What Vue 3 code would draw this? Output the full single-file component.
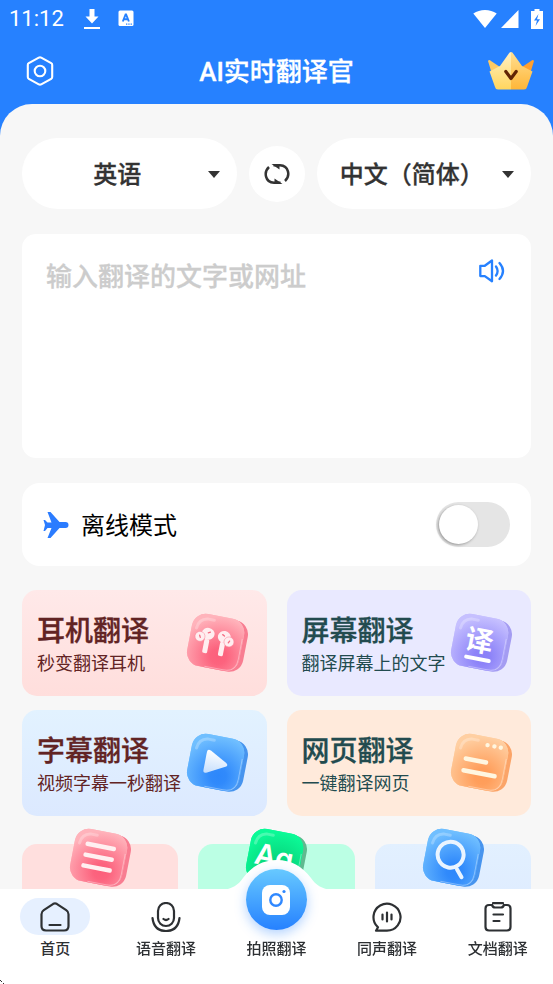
<script setup>
import { ref } from 'vue'

const source = ref('en')
const target = ref('zh')
const text = ref('')
const offline = ref(false)

const swap = () => {
    const old = source.value
    source.value = target.value
    target.value = old
}

const palette = {
    red: { light: '#ffb3bb', dark: '#fc5f7b', edge: '#f87d91' },
    purple: { light: '#c6c0ff', dark: '#8a80f8', edge: '#a49cf2' },
    blue: { light: '#70bfff', dark: '#2d87fb', edge: '#4794ee' },
    orange: { light: '#ffcfa2', dark: '#ff9c58', edge: '#fba468' },
    green: { light: '#0bfa97', dark: '#07cf78', edge: '#5fb98f' }
}

const cards = [
    { id: 'earphone', title: '耳机翻译', desc: '秒变翻译耳机', color: 'red' },
    { id: 'screen', title: '屏幕翻译', desc: '翻译屏幕上的文字', color: 'purple' },
    { id: 'subtitle', title: '字幕翻译', desc: '视频字幕一秒翻译', color: 'blue' },
    { id: 'web', title: '网页翻译', desc: '一键翻译网页', color: 'orange' }
]

const tiles = [
    { id: 'list', color: 'red' },
    { id: 'letters', color: 'green' },
    { id: 'search', color: 'blue' }
]

const tabs = [
    { id: 'home', label: '首页' },
    { id: 'voice', label: '语音翻译' },
    { id: 'photo', label: '拍照翻译' },
    { id: 'live', label: '同声翻译' },
    { id: 'doc', label: '文档翻译' }
]
const current = ref('home')
</script>

<template>
    <div class="app">
        <svg class="defs" width="0" height="0" aria-hidden="true">
            <defs>
                <radialGradient v-for="(c, name) in palette" :id="'g-' + name" :key="name" cx="0.6" cy="0.75" r="0.75">
                    <stop offset="0" :stop-color="c.dark" />
                    <stop offset="0.2" :stop-color="c.dark" stop-opacity="0.95" />
                    <stop offset="1" :stop-color="c.light" />
                </radialGradient>
                <linearGradient id="g-white" x1="0" y1="0" x2="0" y2="1">
                    <stop offset="0" stop-color="#fff" />
                    <stop offset="1" stop-color="#c5defd" />
                </linearGradient>
                <linearGradient id="g-gold" x1="0" y1="0" x2="0" y2="1">
                    <stop offset="0" stop-color="#fff0c5" />
                    <stop offset="1" stop-color="#ffd65e" />
                </linearGradient>
                <linearGradient id="g-amber" x1="0" y1="0" x2="0" y2="1">
                    <stop offset="0" stop-color="#ffdf91" />
                    <stop offset="1" stop-color="#ffb638" />
                </linearGradient>
            </defs>
        </svg>

        <header>
            <div class="status">
                <span class="time">11:12</span>
                <svg class="download" width="16" height="22" viewBox="0 0 16 22" fill="#fff">
                    <path d="M5.500 1h5v7.500h4L8 15.500 1.500 8.500h4zM0 19h16v2H0z" />
                </svg>
                <svg width="16" height="18" viewBox="0 0 16 18">
                    <rect x="0.500" y="0.500" width="15" height="15.500" rx="1.500" fill="#fff" />
                    <path d="M4.800 11.500 7.600 4.500h.5l2.800 7M5.800 9.300h4" fill="none" stroke="#2681ff" stroke-width="1.900" />
                    <path d="M8 14.200h6" stroke="#2681ff" stroke-width="1.300" stroke-dasharray="1.300 1" />
                </svg>
                <span class="spacer"></span>
                <svg width="24" height="20" viewBox="0 0 24 20" fill="#fff">
                    <path d="M0.300 4.500Q5.500 1 12 1t11.700 3.500L12 19z" />
                </svg>
                <svg class="signal" width="18" height="20" viewBox="0 0 18 20" fill="#fff">
                    <path d="M17.500 1v18H0z" />
                </svg>
                <svg class="battery" width="12" height="20" viewBox="0 0 12 20">
                    <path d="M3.500 0h5v2H12v18H0V2h3.500z" fill="#fff" />
                    <path d="M7.500 5 3 11.500h3L4.500 17 9 10.200H6z" fill="#2681ff" />
                </svg>
            </div>
            <div class="topbar">
                <button class="plain settings" aria-label="设置">
                    <svg width="28" height="30" viewBox="0 0 28 30" fill="none" stroke="#fff" stroke-width="2.100" stroke-linejoin="round">
                        <path d="M12.800 1.700a2.500 2.500 0 0 1 2.400 0l10 5.500a2 2 0 0 1 1 1.800v12a2 2 0 0 1-1 1.800l-10 5.500a2.500 2.500 0 0 1-2.400 0l-10-5.500a2 2 0 0 1-1-1.800V9a2 2 0 0 1 1-1.800z" />
                        <circle cx="14" cy="15" r="5.300" />
                    </svg>
                </button>
                <h1>AI实时翻译官</h1>
                <button class="plain" aria-label="会员">
                    <svg width="46" height="38" viewBox="0 0 46 38">
                        <path d="M0 9q1-2 3 0l12 8-7 18z" fill="#ffca62" />
                        <path d="M46 9q-1-2-3 0l-12 8 7 18z" fill="#ffa02f" />
                        <path d="M23 0q-1.500 0-2.500 2L12 14 1.500 19.500 7 35q.500 2.500 3 2.500h13z" fill="url(#g-gold)" />
                        <path d="M23 0q1.500 0 2.500 2L34 14l10.500 5.500L39 35q-.500 2.500-3 2.500H23z" fill="url(#g-amber)" />
                        <path d="m17.800 19.500 5.200 7 5.200-7" fill="none" stroke="#622404" stroke-width="3.200" stroke-linecap="round" stroke-linejoin="round" />
                    </svg>
                </button>
            </div>
        </header>

        <main>
            <div class="languages">
                <div class="picker">
                    <select v-model="source" aria-label="源语言">
                        <option value="en">英语</option>
                        <option value="zh">中文（简体）</option>
                    </select>
                    <span class="caret"></span>
                </div>
                <button class="swap" aria-label="交换语言" @click="swap">
                    <svg width="26" height="22" viewBox="0 0 26 22" fill="none" stroke="#333" stroke-width="2.500">
                        <path d="M5 4C-.5 9 1 19.500 10 19.800h6.500" />
                        <path d="M21 18C26.500 13 25 2.500 16 2.200H9.500" />
                        <path d="M7.500 1h8v5.500zM18.500 21h-8v-5.500z" fill="#333" stroke="none" />
                    </svg>
                </button>
                <div class="picker">
                    <select v-model="target" aria-label="目标语言">
                        <option value="en">英语</option>
                        <option value="zh">中文（简体）</option>
                    </select>
                    <span class="caret"></span>
                </div>
            </div>

            <div class="input-box">
                <textarea v-model="text" placeholder="输入翻译的文字或网址" aria-label="翻译内容"></textarea>
                <button class="plain speaker" aria-label="朗读">
                    <svg width="26" height="24" viewBox="0 0 26 24" fill="none" stroke="#2681ff" stroke-width="2.300" stroke-linejoin="round" stroke-linecap="round">
                        <path d="M1.300 6.800h4.500L13 1.500v20.800l-7.200-5.200H1.300z" />
                        <path d="M17 7.500q3.200 4.500 0 9M20.500 4q7 8 0 16" />
                    </svg>
                </button>
            </div>

            <label class="offline">
                <svg width="26" height="26" viewBox="0 0 26 26" fill="#2b7cff">
                    <path d="M4.500 0h3l9 10h6a3 3 0 0 1 0 6h-6l-9 10h-3l4-10H4.500L2 19H.5L2 13 .5 8H2l2.500 2.500h4z" />
                </svg>
                <span>离线模式</span>
                <input v-model="offline" type="checkbox">
            </label>

            <div class="cards">
                <button v-for="card in cards" :key="card.id" class="card" :class="card.id">
                    <span class="card-text">
                        <strong>{{ card.title }}</strong>
                        <span>{{ card.desc }}</span>
                    </span>
                    <svg class="cube" width="64" height="62" viewBox="0 0 64 62">
                        <g transform="rotate(11 31 31)">
                            <rect x="9" y="5" width="52" height="52" rx="14" :fill="palette[card.color].edge" />
                            <rect x="4" y="4" width="53" height="53" rx="14" :fill="palette[card.color].light" />
                            <rect x="4" y="4" width="53" height="53" rx="14" :fill="`url(#g-${card.color})`" />
                            <path d="M24 56h19q13 0 13-13V22" fill="none" stroke="#fff" stroke-opacity="0.350" />
                            <path d="M9 20q1-10 10-11h6" fill="none" stroke="#fff" stroke-opacity="0.250" stroke-width="3" stroke-linecap="round" />
                            <g v-if="card.id === 'earphone'" fill="#ffeef0">
                                <rect x="19" y="29" width="5" height="14" rx="1.500" />
                                <rect x="35" y="29" width="5" height="14" rx="1.500" />
                                <ellipse cx="21.500" cy="23.500" rx="6.500" ry="6" />
                                <circle cx="14" cy="27.500" r="5" stroke="#f9859a" stroke-width="0.500" />
                                <ellipse cx="38" cy="23.500" rx="6.500" ry="6" />
                                <circle cx="43.500" cy="27.500" r="5" stroke="#f9859a" stroke-width="0.500" />
                                <path d="m13.500 26.500 1 2M44 26.500l-1 2M21.500 22.500l2-1M36 21.500l2 1" stroke="#f66b82" stroke-width="1.300" stroke-linecap="round" />
                            </g>
                            <g v-else-if="card.id === 'screen'">
                                <text class="cube-text" x="30" y="39" font-size="28" text-anchor="middle">译</text>
                                <rect x="18" y="45" width="27" height="4" rx="2" fill="#fff" />
                            </g>
                            <path v-else-if="card.id === 'subtitle'" d="M20 22v18q0 4 4 2l17-9q3-2 0-4l-17-9q-4-2-4 2z" fill="url(#g-white)" />
                            <g v-else fill="#fff6e0">
                                <circle cx="35" cy="12" r="2.200" />
                                <circle cx="42" cy="12" r="2.200" />
                                <circle cx="48.500" cy="12" r="2.200" />
                                <rect x="14" y="27" width="25" height="4.500" rx="2" />
                                <rect x="14" y="39" width="36" height="4.500" rx="2" />
                            </g>
                        </g>
                    </svg>
                </button>
            </div>

            <div class="tiles">
                <button v-for="tile in tiles" :key="tile.id" class="tile" :class="tile.id" :aria-label="tile.id">
                    <svg class="cube" width="64" height="62" viewBox="0 0 64 62">
                        <g transform="rotate(11 31 31)">
                            <rect x="9" y="5" width="52" height="52" rx="14" :fill="palette[tile.color].edge" />
                            <rect x="4" y="4" width="53" height="53" rx="14" :fill="palette[tile.color].light" />
                            <rect x="4" y="4" width="53" height="53" rx="14" :fill="`url(#g-${tile.color})`" />
                            <path d="M24 56h19q13 0 13-13V22" fill="none" stroke="#fff" stroke-opacity="0.350" />
                            <path d="M9 20q1-10 10-11h6" fill="none" stroke="#fff" stroke-opacity="0.250" stroke-width="3" stroke-linecap="round" />
                            <g v-if="tile.id === 'list'" fill="#fff0f1">
                                <rect x="15" y="17" width="31" height="4.500" rx="2" />
                                <rect x="15" y="28" width="31" height="4.500" rx="2" />
                                <rect x="15" y="39" width="31" height="4.500" rx="2" />
                            </g>
                            <text v-else-if="tile.id === 'letters'" class="cube-text latin" x="30" y="40" font-size="29" text-anchor="middle">Ag</text>
                            <g v-else fill="none" stroke="#eaf4ff" stroke-width="4" stroke-linecap="round">
                                <circle cx="29" cy="28" r="13" />
                                <path d="m38 41 6 7" />
                            </g>
                        </g>
                    </svg>
                </button>
            </div>
        </main>

        <nav>
            <svg class="bump" width="112" height="30" viewBox="0 0 112 30" fill="#fff">
                <path d="M0 30C12 29 17 25 22 18 31 6 42 0 56 0s25 6 34 18c5 7 10 11 22 12z" />
            </svg>
            <a v-for="tab in tabs" :key="tab.id" href="#" :class="{ active: current === tab.id }" @click.prevent="current = tab.id">
                <span v-if="tab.id === 'photo'" class="camera">
                    <svg width="30" height="30" viewBox="0 0 30 30">
                        <rect x="1" width="28" height="30" rx="8" fill="#fff" />
                        <circle cx="15" cy="15" r="5.700" fill="none" stroke="#2f88ff" stroke-width="2.400" />
                        <circle cx="23" cy="6.500" r="1.600" fill="#2f88ff" />
                    </svg>
                </span>
                <span class="tab-icon">
                    <svg v-if="tab.id !== 'photo'" width="30" height="30" viewBox="0 0 30 30" fill="none" stroke="#2d3033" stroke-width="2.200" stroke-linecap="round" stroke-linejoin="round">
                        <g v-if="tab.id === 'home'">
                            <path d="M13.300 1.800q1.700-1 3.400 0l9.500 6.400q2.300 1.500 2.300 4V24q0 4.500-4.500 4.500H6q-4.500 0-4.500-4.500V12.200q0-2.500 2.300-4zM9.500 23h11" />
                        </g>
                        <g v-else-if="tab.id === 'voice'">
                            <rect x="7" y="1" width="16" height="23" rx="8" />
                            <path d="M1.500 16q1.500 13 13.500 13t13.500-13M12.500 17q2.500 2 5 0" />
                        </g>
                        <g v-else-if="tab.id === 'live'">
                            <path d="M5.500 24.800A13.500 13.500 0 1 1 15 28.700H4l2-3.500M10.500 12.500v5M15 10.500v9M19.500 12.500v5" />
                        </g>
                        <g v-else>
                            <path d="M8.500 3H6Q2.500 3 2.500 6.500V25q0 3.500 3.500 3.500h18q3.500 0 3.500-3.500V6.500Q27.500 3 24 3h-2.500M10 1.200h10M9 3q1 2.500 3 2.500h6q2 0 3-2.500M10.500 12.500h9.500M10.500 19h6" />
                        </g>
                    </svg>
                </span>
                <span class="label">{{ tab.label }}</span>
            </a>
            <svg class="grip" width="4" height="4" viewBox="0 0 4 4" fill="#333">
                <path d="M0 0h1v1H0zM1 1h1v1H1zM3 3h1v1H3z" />
            </svg>
        </nav>
    </div>
</template>

<style>
body {
    margin: 0;
}
</style>

<style scoped>
.app {
    display: flex;
    flex-direction: column;
    height: 100vh;
    overflow: hidden;
    background: #2681ff;
    color: #333;
    font-family: Roboto, "Noto Sans CJK SC", sans-serif;
}

.app * {
    box-sizing: border-box;
}

.defs {
    position: absolute;
}

svg {
    display: block;
    flex: none;
}

button,
select,
textarea {
    margin: 0;
    padding: 0;
    border: 0;
    outline: none;
    font-family: inherit;
    color: inherit;
}

.plain {
    background: none;
}

/* Thicken the regular CJK face towards a medium weight */
h1,
.picker select,
textarea::placeholder,
.card-text strong {
    -webkit-text-stroke: 0.3px currentcolor;
}

/* Header */

.status {
    display: flex;
    align-items: center;
    height: 38px;
    padding: 0 10px 0 9px;
    color: #fff;
}

.time {
    font-size: 22px;
    line-height: 38px;
}

.download {
    margin: 0 18px 0 20px;
}

.spacer {
    flex: 1;
}

.signal {
    margin: 0 12px 0 4px;
}

.topbar {
    display: flex;
    align-items: center;
    justify-content: space-between;
    height: 66px;
    padding: 0 19px;
}

.settings {
    width: 46px;
    padding-left: 7px;
}

h1 {
    margin: 0;
    padding-top: 2px;
    color: #fff;
    font-size: 26px;
    font-weight: 500;
    line-height: 38px;
}

/* Content */

main {
    flex: 1;
    min-height: 0;
    padding: 34px 22px 0;
    overflow-y: auto;
    scrollbar-width: none;
    border-radius: 32px 32px 0 0;
    background: #f7f7f7;
}

.languages {
    display: flex;
    align-items: center;
    gap: 12px;
}

.picker {
    position: relative;
    flex: 1;
    min-width: 0;
}

.picker select {
    appearance: none;
    display: block;
    width: 100%;
    height: 71px;
    padding: 3px 24px 0 0;
    border-radius: 36px;
    background: #fff;
    font-size: 24px;
    font-weight: 500;
    text-align: center;
    text-align-last: center;
}

.caret {
    position: absolute;
    top: 33px;
    right: 17px;
    border: 6px solid transparent;
    border-top: 7px solid #333;
    border-bottom: 0;
    pointer-events: none;
}

.swap {
    display: flex;
    align-items: center;
    justify-content: center;
    width: 56px;
    height: 56px;
    border-radius: 50%;
    background: #fff;
}

.input-box {
    display: flex;
    align-items: flex-start;
    height: 224px;
    margin-top: 25px;
    padding: 25px 26px 24px 24px;
    border-radius: 14px;
    background: #fff;
}

textarea {
    flex: 1;
    min-width: 0;
    height: 100%;
    resize: none;
    background: none;
    font-size: 26px;
    font-weight: 500;
    line-height: 36px;
}

textarea::placeholder {
    color: #ccc;
    opacity: 1;
}

.offline {
    display: flex;
    align-items: center;
    gap: 12px;
    height: 83px;
    margin-top: 25px;
    padding: 0 21px;
    border-radius: 18px;
    background: #fff;
    color: #000;
    font-size: 24px;
}

.offline span {
    padding-bottom: 2px;
}

.offline input {
    appearance: none;
    display: flex;
    align-items: center;
    width: 74px;
    height: 45px;
    margin: 0 0 0 auto;
    padding: 3px;
    border-radius: 23px;
    background: #e5e5e5;
}

.offline input::before {
    content: "";
    width: 39px;
    height: 39px;
    border-radius: 50%;
    background: #fff;
    box-shadow: -1px 1px 3px rgb(0 0 0 / 35%);
}

.offline input:checked {
    justify-content: flex-end;
    background: #2681ff;
}

.cards {
    display: grid;
    grid-template-columns: 1fr 1fr;
    gap: 14px 20px;
    margin-top: 24px;
}

.card {
    display: flex;
    align-items: center;
    justify-content: space-between;
    height: 106px;
    padding: 0 18px 0 15px;
    border-radius: 15px;
    color: #622424;
    text-align: left;
}

.card-text {
    display: flex;
    flex-direction: column;
    width: 0;
    padding-top: 4px;
    white-space: nowrap;
    font-size: 18px;
    line-height: 26px;
}

.card-text strong {
    font-size: 28px;
    font-weight: 500;
    line-height: 38px;
}

.earphone {
    background: linear-gradient(#ffe9e9, #ffdedc);
}

.screen {
    background: #e9e9ff;
    color: #224b4f;
}

.subtitle {
    background: linear-gradient(#e2f2ff, #dce9ff);
}

.web {
    background: #ffeadb;
    color: #224b4f;
}

.cube-text {
    fill: #fff;
    font-family: Inter, "Noto Sans CJK SC", sans-serif;
    font-weight: 700;
}

.cube-text.latin {
    font-weight: 600;
}

.tiles {
    display: grid;
    grid-template-columns: repeat(3, 1fr);
    gap: 20px;
    margin-top: 28px;
}

.tile {
    display: flex;
    justify-content: center;
    height: 106px;
    border-radius: 15px;
}

.tile .cube {
    margin-top: -17px;
}

.list {
    background: #ffdfde;
}

.letters {
    background: #bbffe4;
}

.search {
    background: linear-gradient(#e2f0ff, #dce9ff);
}

/* Bottom tabs */

nav {
    position: relative;
    display: flex;
    height: 95px;
    padding-top: 9px;
    background: #fff;
}

nav a {
    position: relative;
    flex: 1;
    display: flex;
    flex-direction: column;
    align-items: center;
    color: #2d3033;
    text-decoration: none;
}

.bump {
    position: absolute;
    top: -29px;
    left: calc(50% - 56px);
}

.tab-icon {
    display: flex;
    align-items: center;
    justify-content: center;
    width: 70px;
    height: 37px;
    border-radius: 19px;
}

.active .tab-icon {
    background: #e6f0ff;
}

.label {
    font-size: 15px;
    font-weight: 500;
    line-height: 28px;
}

.camera {
    position: absolute;
    top: -29px;
    display: flex;
    align-items: center;
    justify-content: center;
    width: 61px;
    height: 61px;
    border-radius: 50%;
    background: linear-gradient(#67c9ff, #2681ff);
    box-shadow: 0 4px 12px rgb(38 129 255 / 35%);
}

.grip {
    position: absolute;
    bottom: 0;
    left: 0;
}
</style>
